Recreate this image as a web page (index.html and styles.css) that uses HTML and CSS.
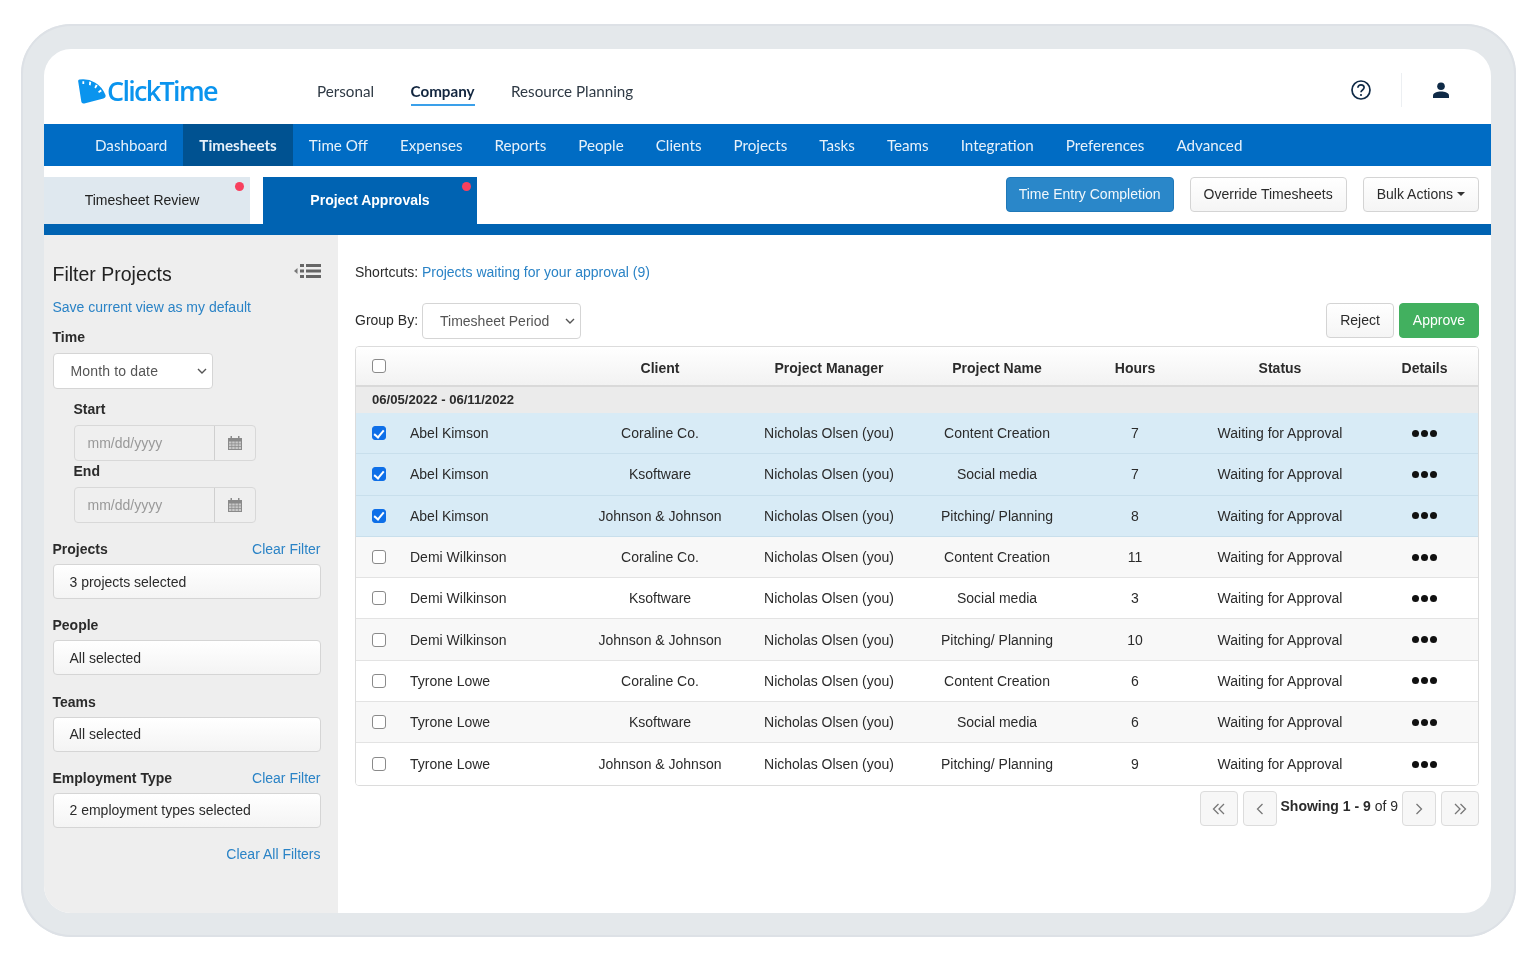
FILE: index.html
```html
<!DOCTYPE html>
<html lang="en">
<head>
<meta charset="utf-8">
<title>ClickTime - Project Approvals</title>
<link rel="stylesheet" href="styles.css">
</head>
<body>
<svg class="sprites" width="0" height="0" aria-hidden="true">
  <symbol id="cal" viewBox="0 0 14 14">
    <path fill="#8a8a8a" d="M0 2h2.5V0h1.5v2h6V0h1.5v2H14v12H0z"/>
    <path fill="#c9c9c9" d="M1 5.5h2.5v2H1zM4.2 5.5h2.5v2H4.2zM7.4 5.5h2.5v2H7.4zM10.6 5.5H13v2h-2.4zM1 8.2h2.5v2H1zM4.2 8.2h2.5v2H4.2zM7.4 8.2h2.5v2H7.4zM10.6 8.2H13v2h-2.4zM1 10.9h2.5V13H1zM4.2 10.9h2.5V13H4.2zM7.4 10.9h2.5V13H7.4zM10.6 10.9H13V13h-2.4z"/>
  </symbol>
  <symbol id="chev" viewBox="0 0 10 6">
    <path fill="none" stroke="#555" stroke-width="1.4" d="M1 1l4 4 4-4"/>
  </symbol>
</svg>
<div class="frame">
  <div class="screen">
    <header class="topbar">
      <a class="logo">
        <svg class="logo-mark" viewBox="0 0 28 25" width="28" height="25">
          <path fill="#0a94ee" d="M1.500 .5A24 24 0 0 1 27.500 16c.4 1.800-.3 2.900-2.100 3.400L6.300 24.400c-1.600.4-2.700-.3-3-1.800L.2 2.400C0 1.300.5.600 1.500.5z"/>
          <path fill="#fff" d="M11.200 2.500l2 .5-.6 3.400-1.600-.3zM17.800 5.500l1.800 1.100-1.800 2.800-1.400-.9zM22.700 10.500l1.100 1.700-2.800 1.700-.9-1.300zM4.400 2.300h1.800v2.800H4.400z"/>
        </svg>
        <span>ClickTime</span>
      </a>
      <nav class="top-links">
        <a>Personal</a>
        <a class="current">Company</a>
        <a>Resource Planning</a>
      </nav>
      <div class="top-icons">
        <svg class="help" viewBox="0 0 20 20" width="20" height="20">
          <circle cx="10" cy="10" r="9" fill="none" stroke="#0f2a47" stroke-width="1.700"/>
          <path fill="none" stroke="#0f2a47" stroke-width="1.700" d="M6.900 7.800c0-1.900 1.400-3 3.100-3s3.100 1.100 3.100 2.800c0 2.400-3.100 2.300-3.100 4.600"/>
          <circle cx="10" cy="15" r="1.100" fill="#0f2a47"/>
        </svg>
        <span class="divider"></span>
        <svg class="user" viewBox="0 0 16 16" width="16" height="16">
          <circle cx="8" cy="4.200" r="3.800" fill="#0f2a47"/>
          <path fill="#0f2a47" d="M0 16v-2.500C0 10.800 4.500 9.600 8 9.600s8 1.200 8 3.900V16z"/>
        </svg>
      </div>
    </header>

    <nav class="mainnav">
      <a>Dashboard</a>
      <a class="active">Timesheets</a>
      <a>Time Off</a>
      <a>Expenses</a>
      <a>Reports</a>
      <a>People</a>
      <a>Clients</a>
      <a>Projects</a>
      <a>Tasks</a>
      <a>Teams</a>
      <a>Integration</a>
      <a>Preferences</a>
      <a>Advanced</a>
    </nav>

    <div class="subbar">
      <a class="tab tab-light">Timesheet Review<i class="dot"></i></a>
      <a class="tab tab-blue">Project Approvals<i class="dot"></i></a>
      <div class="subactions">
        <button class="btn btn-info">Time Entry Completion</button>
        <button class="btn">Override Timesheets</button>
        <button class="btn">Bulk Actions<i class="caret"></i></button>
      </div>
    </div>
    <div class="strip"></div>

    <div class="content">
      <aside class="sidebar">
        <div class="side-head">
          <h2>Filter Projects</h2>
          <svg class="collapse" viewBox="0 0 27 14" width="27" height="14">
            <path fill="#777" d="M0 7l3.500-3v6z"/>
            <path fill="#666" d="M6 0h4v3H6zM6 5.500h4v3H6zM6 11h4v3H6zM12 0h15v3H12zM12 5.500h15v3H12zM12 11h15v3H12z"/>
          </svg>
        </div>
        <a class="link save">Save current view as my default</a>
        <label class="flabel time">Time</label>
        <div class="select month">Month to date<svg width="10" height="6"><use href="#chev"/></svg></div>
        <div class="dates">
          <label class="flabel start">Start</label>
          <div class="datebox"><span>mm/dd/yyyy</span><b><svg width="14" height="14"><use href="#cal"/></svg></b></div>
          <label class="flabel end">End</label>
          <div class="datebox"><span>mm/dd/yyyy</span><b><svg width="14" height="14"><use href="#cal"/></svg></b></div>
        </div>
        <div class="fhead projects"><label class="flabel">Projects</label><a class="link">Clear Filter</a></div>
        <div class="multi">3 projects selected</div>
        <div class="fhead"><label class="flabel">People</label></div>
        <div class="multi">All selected</div>
        <div class="fhead"><label class="flabel">Teams</label></div>
        <div class="multi">All selected</div>
        <div class="fhead"><label class="flabel">Employment Type</label><a class="link">Clear Filter</a></div>
        <div class="multi">2 employment types selected</div>
        <a class="link clearall">Clear All Filters</a>
      </aside>

      <main class="main">
        <p class="shortcuts">Shortcuts: <a class="link">Projects waiting for your approval (9)</a></p>
        <div class="toolbar">
          <span class="groupby">Group By:</span>
          <div class="select period">Timesheet Period<svg width="10" height="6"><use href="#chev"/></svg></div>
          <div class="approve-btns">
            <button class="btn">Reject</button>
            <button class="btn btn-green">Approve</button>
          </div>
        </div>

        <div class="table">
          <div class="row thead">
            <span class="c-check"><i class="cb"></i></span><span></span>
            <span>Client</span><span>Project Manager</span><span>Project Name</span><span>Hours</span><span>Status</span><span>Details</span>
          </div>
          <div class="groupline">06/05/2022 - 06/11/2022</div>

          <div class="row sel"><span class="c-check"><i class="cb on"></i></span><span class="name">Abel Kimson</span><span>Coraline Co.</span><span>Nicholas Olsen (you)</span><span>Content Creation</span><span>7</span><span>Waiting for Approval</span><span class="more"><i></i><i></i><i></i></span></div>
          <div class="row sel"><span class="c-check"><i class="cb on"></i></span><span class="name">Abel Kimson</span><span>Ksoftware</span><span>Nicholas Olsen (you)</span><span>Social media</span><span>7</span><span>Waiting for Approval</span><span class="more"><i></i><i></i><i></i></span></div>
          <div class="row sel"><span class="c-check"><i class="cb on"></i></span><span class="name">Abel Kimson</span><span>Johnson &amp; Johnson</span><span>Nicholas Olsen (you)</span><span>Pitching/ Planning</span><span>8</span><span>Waiting for Approval</span><span class="more"><i></i><i></i><i></i></span></div>
          <div class="row alt"><span class="c-check"><i class="cb"></i></span><span class="name">Demi Wilkinson</span><span>Coraline Co.</span><span>Nicholas Olsen (you)</span><span>Content Creation</span><span>11</span><span>Waiting for Approval</span><span class="more"><i></i><i></i><i></i></span></div>
          <div class="row"><span class="c-check"><i class="cb"></i></span><span class="name">Demi Wilkinson</span><span>Ksoftware</span><span>Nicholas Olsen (you)</span><span>Social media</span><span>3</span><span>Waiting for Approval</span><span class="more"><i></i><i></i><i></i></span></div>
          <div class="row alt"><span class="c-check"><i class="cb"></i></span><span class="name">Demi Wilkinson</span><span>Johnson &amp; Johnson</span><span>Nicholas Olsen (you)</span><span>Pitching/ Planning</span><span>10</span><span>Waiting for Approval</span><span class="more"><i></i><i></i><i></i></span></div>
          <div class="row"><span class="c-check"><i class="cb"></i></span><span class="name">Tyrone Lowe</span><span>Coraline Co.</span><span>Nicholas Olsen (you)</span><span>Content Creation</span><span>6</span><span>Waiting for Approval</span><span class="more"><i></i><i></i><i></i></span></div>
          <div class="row alt"><span class="c-check"><i class="cb"></i></span><span class="name">Tyrone Lowe</span><span>Ksoftware</span><span>Nicholas Olsen (you)</span><span>Social media</span><span>6</span><span>Waiting for Approval</span><span class="more"><i></i><i></i><i></i></span></div>
          <div class="row last"><span class="c-check"><i class="cb"></i></span><span class="name">Tyrone Lowe</span><span>Johnson &amp; Johnson</span><span>Nicholas Olsen (you)</span><span>Pitching/ Planning</span><span>9</span><span>Waiting for Approval</span><span class="more"><i></i><i></i><i></i></span></div>
        </div>

        <div class="pager">
          <button class="pg wide"><svg viewBox="0 0 14 12" width="14" height="12"><path fill="none" stroke="#777" stroke-width="1.300" d="M6.500 1L1.500 6l5 5M12 1L7 6l5 5"/></svg></button>
          <button class="pg"><svg viewBox="0 0 8 12" width="8" height="12"><path fill="none" stroke="#777" stroke-width="1.300" d="M6.500 1L1.500 6l5 5"/></svg></button>
          <span class="showing"><b>Showing 1 - 9</b> of 9</span>
          <button class="pg"><svg viewBox="0 0 8 12" width="8" height="12"><path fill="none" stroke="#777" stroke-width="1.300" d="M1.500 1l5 5-5 5"/></svg></button>
          <button class="pg wide"><svg viewBox="0 0 14 12" width="14" height="12"><path fill="none" stroke="#777" stroke-width="1.300" d="M2 1l5 5-5 5M7.500 1l5 5-5 5"/></svg></button>
        </div>
      </main>
    </div>
  </div>
</div>
</body>
</html>
```

FILE: styles.css
```css
* { box-sizing: border-box; }
html, body { margin: 0; padding: 0; }
body {
  background: #fff;
  font-family: "Liberation Sans", Arial, sans-serif;
  font-size: 14px;
  color: #2b2b2b;
  height: 960px;
  overflow: hidden;
}
a { text-decoration: none; color: inherit; }
.sprites { position: absolute; }

.frame {
  width: 1495px;
  height: 913px;
  margin: 24px 0 0 21px;
  padding: 25px 25px 24px 23px;
  background: #e4e8eb;
  border-radius: 50px;
  box-shadow: inset 0 0 0 2px #dde1e6;
  filter: blur(0.3px);
}
.screen {
  height: 100%;
  background: #fff;
  border-radius: 27px;
  overflow: hidden;
  display: flex;
  flex-direction: column;
}

/* top bar */
.topbar {
  height: 75px;
  flex: none;
  padding-top: 6px;
  display: flex;
  align-items: center;
  font-family: Lato, sans-serif;
}
.logo {
  width: 273px;
  padding-left: 34px;
  margin-top: 2px;
  display: flex;
  align-items: center;
  font-family: "Open Sans", Lato, sans-serif;
  font-size: 27px;
  font-weight: 600;
  letter-spacing: -1.700px;
  color: #0a94ee;
}
.logo span { margin-left: 1px; }
.logo-mark { flex: none; margin-top: 1px; }
.top-links { display: flex; gap: 36.500px; font-size: 15.2px; color: #2f3a45; }
.top-links a { padding: 6px 0 4px; border-bottom: 2px solid transparent; margin-top: 2px; }
.top-links .current { font-weight: 700; color: #12263f; border-bottom-color: #3aa0ea; }
.top-icons { margin-left: auto; display: flex; align-items: center; padding-right: 42px; }
.help { margin-right: 30px; }
.divider { width: 1px; height: 34px; background: #eceff2; margin-right: 31px; }

/* main nav */
.mainnav {
  height: 42px;
  flex: none;
  background: #006cc4;
  display: flex;
  padding-left: 35px;
  font-family: Lato, sans-serif;
  font-size: 15.2px;
  color: #e6f1fa;
}
.mainnav a { padding: 0 16px; display: flex; align-items: center; }
.mainnav .active { background: #005291; font-weight: 700; }

/* sub bar */
.subbar {
  height: 58px;
  flex: none;
  display: flex;
  align-items: flex-end;
  padding-right: 12px;
}
.tab {
  position: relative;
  height: 47px;
  display: flex;
  align-items: center;
  justify-content: center;
  padding-bottom: 1px;
}
.tab-light { width: 206px; background: #dfe8ef; color: #222; padding-right: 10px; }
.tab-blue { width: 214px; margin-left: 13px; background: #0063b2; color: #fff; font-weight: 700; padding-right: 0; }
.dot {
  position: absolute;
  top: 5px;
  right: 6px;
  width: 9px;
  height: 9px;
  border-radius: 50%;
  background: #f8405e;
}
.subactions { margin-left: auto; align-self: flex-start; padding-top: 11px; display: flex; gap: 16px; }
.btn {
  height: 35px;
  padding: 0 13px 2px;
  border: 1px solid #d4d4d4;
  border-radius: 4px;
  background: linear-gradient(#fff, #f5f5f5);
  font: 14px "Liberation Sans", Arial, sans-serif;
  color: #2b2b2b;
  display: flex;
  align-items: center;
}
.btn-info { background: #2a87c9; border-color: #1f78b8; color: #f2f8fc; padding: 0 12px 2px; }
.btn-green { background: #42b05f; border-color: #42b05f; color: #fff; }
.caret {
  margin-left: 4px;
  margin-top: 1px;
  border-top: 4px solid #333;
  border-left: 4px solid transparent;
  border-right: 4px solid transparent;
}
.strip { height: 11px; flex: none; background: #0063b2; }

/* content */
.content { flex: 1; min-height: 0; display: flex; }
.sidebar {
  width: 294px;
  flex: none;
  background: #eeeeee;
  padding: 0 17.5px 0 8.5px;
  display: flex;
  flex-direction: column;
}
.side-head { display: flex; justify-content: space-between; align-items: flex-start; padding-top: 28px; }
.side-head h2 { margin: 0; font-size: 19.500px; font-weight: 400; line-height: 23px; color: #222; }
.collapse { margin-top: 1px; }
.link { color: #2a83c6; }
.save { margin-top: 13px; line-height: 16px; }
.flabel { font-weight: 700; color: #2b2b2b; line-height: 16px; display: block; }
.time { margin-top: 14px; }
.select {
  background: #fff;
  border: 1px solid #d5d5d5;
  border-radius: 4px;
  height: 36px;
  display: flex;
  align-items: center;
  justify-content: space-between;
  padding: 0 5px 0 17px;
  color: #555;
}
.month { width: 160px; margin-top: 8px; letter-spacing: 0.15px; }
.dates { padding-left: 21px; }
.start { margin-top: 12px; }
.end { margin-top: 2px; }
.datebox {
  width: 182px;
  height: 36px;
  margin-top: 8px;
  display: flex;
  border: 1px solid #d8d8d8;
  border-radius: 4px;
  background: #efefef;
  color: #999;
}
.datebox span { flex: 1; padding-left: 13px; display: flex; align-items: center; border-right: 1px solid #cfcfcf; }
.datebox b { width: 40px; display: flex; align-items: center; justify-content: center; }
.fhead { display: flex; justify-content: space-between; line-height: 16px; margin-top: 18.300px; }
.fhead.projects { margin-top: 18px; }
.multi {
  height: 35px;
  margin-top: 7px;
  padding-left: 16px;
  display: flex;
  align-items: center;
  border: 1px solid #d5d5d5;
  border-radius: 4px;
  background: linear-gradient(#fff, #f4f4f4);
  color: #2b2b2b;
}
.clearall { align-self: flex-end; margin-top: 18px; line-height: 16px; }

/* main */
.main { flex: 1; min-width: 0; padding: 0 12px 0 17px; display: flex; flex-direction: column; }
.shortcuts { margin: 29px 0 0; line-height: 16px; }
.toolbar { display: flex; align-items: flex-start; margin-top: 23px; height: 36px; }
.groupby { line-height: 16px; margin-top: 9px; }
.period { width: 159px; margin-left: 4px; padding-left: 17px; }
.approve-btns { margin-left: auto; display: flex; gap: 5px; }

.table {
  margin-top: 7px;
  border: 1px solid #dcdcdc;
  border-radius: 4px;
  overflow: hidden;
}
.row {
  height: 41.300px;
  display: grid;
  grid-template-columns: 54px 165px 170px 168px 168px 108px 182px 1fr;
  align-items: center;
  text-align: center;
  border-bottom: 1px solid #e3e3e3;
  background: #fff;
}
.row.alt { background: #f8f8f8; }
.row.last { border-bottom: 0; }
.row.sel { background: #d8ebf6; border-bottom-color: #c8dfec; }
.row.thead {
  height: 40px;
  padding-top: 4px;
  background: linear-gradient(#fff, #f2f2f2);
  font-weight: 700;
  border-bottom: 2px solid #d9d9d9;
}
.thead .c-check { margin-top: -5px; }
.groupline {
  height: 26px;
  padding-left: 16px;
  padding-bottom: 1px;
  display: flex;
  align-items: center;
  font-size: 13.100px;
  font-weight: 700;
  background: #ebebeb;
}
.c-check { display: flex; justify-content: center; padding-right: 9px; }
.name { text-align: left; }
.cb {
  width: 14px;
  height: 14px;
  border: 1.500px solid #8a8a8a;
  border-radius: 3px;
  background: #fff;
  position: relative;
  display: block;
}
.cb.on { background: #0e6fe8; border-color: #0e6fe8; }
.cb.on::after {
  content: "";
  position: absolute;
  left: 3.500px;
  top: 0.500px;
  width: 4px;
  height: 8px;
  border: solid #fff;
  border-width: 0 2px 2px 0;
  transform: rotate(40deg);
}
.more { display: flex; justify-content: center; gap: 2px; }
.more i { width: 7px; height: 7px; border-radius: 50%; background: #111; }

.pager { display: flex; justify-content: flex-end; align-items: flex-start; gap: 5px; margin-top: 5.500px; }
.pg {
  width: 34px;
  height: 35px;
  padding: 0;
  border: 1px solid #dcdcdc;
  border-radius: 4px;
  background: #f7f7f7;
  display: flex;
  align-items: center;
  justify-content: center;
}
.pg.wide { width: 38px; }
.showing { line-height: 16px; padding: 7px 0 0; margin-left: -1px; margin-right: -1px; white-space: nowrap; }
```
